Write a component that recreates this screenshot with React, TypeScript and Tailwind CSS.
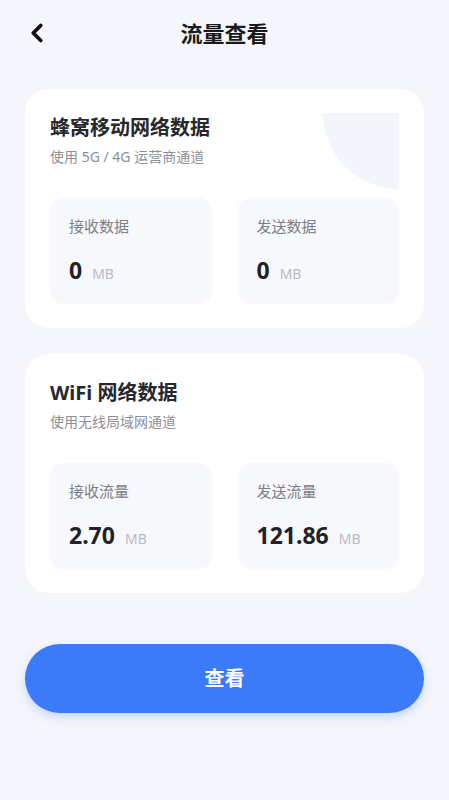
import { ChevronLeft } from 'lucide-react';

const FONT = { fontFamily: '"Noto Sans", "Noto Sans CJK SC", sans-serif' };

function StatBox({ label, value }: { label: string; value: string }) {
  return (
    <div className="flex h-[105px] flex-col rounded-[14px] bg-[#f6f8fc] px-[19px] pt-[17px] shadow-[0_1px_3px_rgba(30,50,100,0.04)]">
      <span className="text-[15px] leading-[22px] text-[#7b7f87]">{label}</span>
      <div className="mt-[19px] flex items-baseline gap-[10px]">
        <span className="text-[23px] font-bold leading-[28px] text-[#1f2227]">{value}</span>
        <span className="text-[14px] text-[#b9bcc3]">MB</span>
      </div>
    </div>
  );
}

function DataCard({
  title,
  subtitle,
  stats,
  deco,
}: {
  title: string;
  subtitle: string;
  stats: { label: string; value: string }[];
  deco?: boolean;
}) {
  return (
    <div className="relative rounded-[24px] bg-white px-[25px] pb-[25px] pt-[25px]">
      {deco && (
        <div className="absolute right-[25px] top-[24px] h-[76px] w-[76px] rounded-bl-full bg-[#f3f5fc]" />
      )}
      <div className="relative">
        <h2 className="text-[20px] font-bold leading-[28px] text-[#26282c]">{title}</h2>
        <p className="mt-[5px] text-[14px] leading-[20px] text-[#8d9098]">{subtitle}</p>
      </div>
      <div className="relative mt-[31px] grid grid-cols-2 gap-[26px]">
        {stats.map((s) => (
          <StatBox key={s.label} label={s.label} value={s.value} />
        ))}
      </div>
    </div>
  );
}

export default function App() {
  return (
    <div className="flex min-h-[800px] w-full flex-col bg-[#f4f6fb]" style={FONT}>
      {/* Header */}
      <div className="relative flex h-[66px] items-center justify-center">
        <button type="button" className="absolute left-[22px] top-[18px] text-[#111]">
          <ChevronLeft size={30} strokeWidth={3} />
        </button>
        <h1 className="text-[22px] font-bold text-[#1a1a1a]">流量查看</h1>
      </div>

      <div className="mt-[23px] flex flex-col gap-[26px] px-[25px]">
        <DataCard
          deco
          title="蜂窝移动网络数据"
          subtitle="使用 5G / 4G 运营商通道"
          stats={[
            { label: '接收数据', value: '0' },
            { label: '发送数据', value: '0' },
          ]}
        />
        <DataCard
          title="WiFi 网络数据"
          subtitle="使用无线局域网通道"
          stats={[
            { label: '接收流量', value: '2.70' },
            { label: '发送流量', value: '121.86' },
          ]}
        />
      </div>

      <div className="mt-[51px] px-[25px]">
        <button
          type="button"
          className="flex h-[69px] w-full items-center justify-center rounded-full bg-[#3b7bfa] text-[20px] font-bold text-white shadow-[0_4px_10px_rgba(59,123,250,0.25)]"
        >
          查看
        </button>
      </div>
    </div>
  );
}
